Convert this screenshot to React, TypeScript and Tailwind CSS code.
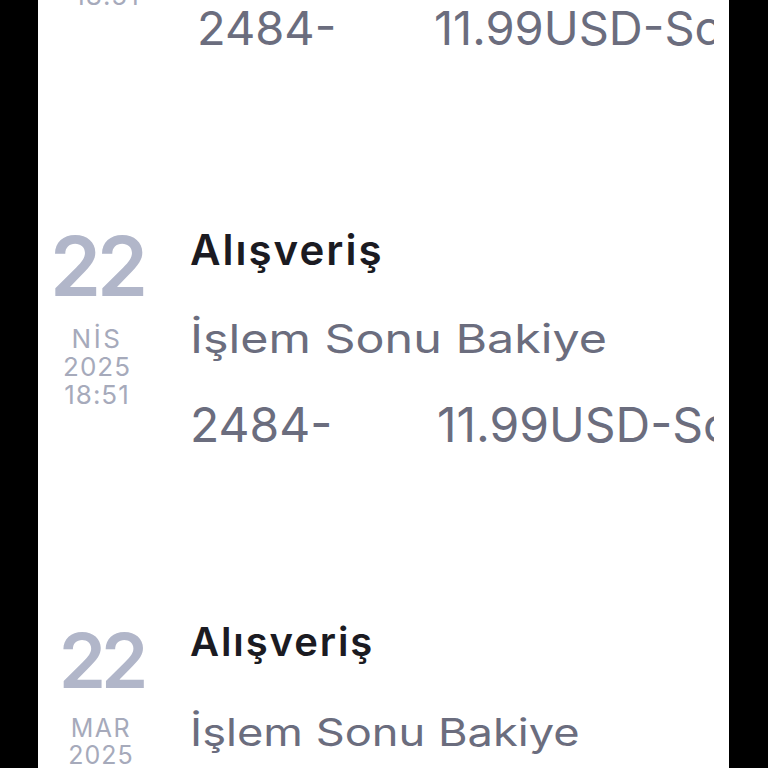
import React from "react";

const font = { fontFamily: "Inter, 'Noto Sans', sans-serif" };

export default function App() {
  return (
    <div className="w-full h-[768px] bg-black flex overflow-hidden" style={font}>
      <div className="ml-[38px] w-[691px] h-[768px] bg-white overflow-hidden pr-[15px] flex flex-col">
        {/* Row 1 (mostly scrolled above) */}
        <div className="-mt-[173px] h-[399px] shrink-0 flex items-start">
          <div className="ml-[10px] w-[118px] shrink-0 flex flex-col items-center">
            <div className="text-[82px] leading-none font-semibold text-[#b1b6c9] tracking-[-4px]">22</div>
            <div className="mt-[17px] text-[26px] leading-[28px] text-[#a6aabb] text-center tracking-[1px]">
              <div className="tracking-[2.5px]">NİS</div>
              <div>2025</div>
              <div>18:51</div>
            </div>
          </div>
          <div className="ml-[31px] flex-1 min-w-0 overflow-hidden whitespace-nowrap">
            <div className="mt-[3px] text-[42px] leading-none font-semibold text-[#1b1b22] tracking-[2px]">Alışveriş</div>
            <div className="mt-[48px] text-[40px] leading-none text-[#6b6d7e] origin-left scale-x-[1.21]">İşlem Sonu Bakiye</div>
            <div className="mt-[44px] text-[47px] leading-none text-[#6b6d7e]">
              <span className="inline-block w-[237px]">2484-</span>
              <span>11.99USD-Scribd</span>
            </div>
          </div>
        </div>

        {/* Row 2 */}
        <div className="h-[396px] shrink-0 flex items-start">
          <div className="w-[118px] shrink-0 flex flex-col items-center">
            <div className="text-[82px] leading-none font-semibold text-[#b1b6c9] tracking-[-4px]">22</div>
            <div className="mt-[17px] text-[26px] leading-[28px] text-[#a6aabb] text-center tracking-[1px]">
              <div className="tracking-[2.5px]">NİS</div>
              <div>2025</div>
              <div>18:51</div>
            </div>
          </div>
          <div className="ml-[34px] flex-1 min-w-0 overflow-hidden whitespace-nowrap">
            <div className="mt-[3px] text-[42px] leading-none font-semibold text-[#1b1b22] tracking-[2px]">Alışveriş</div>
            <div className="mt-[48px] text-[40px] leading-none text-[#6b6d7e] origin-left scale-x-[1.21]">İşlem Sonu Bakiye</div>
            <div className="mt-[42px] text-[48px] leading-none text-[#6b6d7e]">
              <span className="inline-block w-[247px]">2484-</span>
              <span>11.99USD-Scribd</span>
            </div>
          </div>
        </div>

        {/* Row 3 */}
        <div className="h-[400px] shrink-0 flex items-start">
          <div className="ml-[4px] w-[118px] shrink-0 flex flex-col items-center">
            <div className="text-[76px] leading-none font-semibold text-[#b1b6c9] tracking-[-5px]">22</div>
            <div className="mt-[17px] text-[25px] leading-[27px] text-[#a6aabb] text-center tracking-[1px]">
              <div className="tracking-[1.5px]">MAR</div>
              <div>2025</div>
              <div>18:51</div>
            </div>
          </div>
          <div className="ml-[30px] flex-1 min-w-0 overflow-hidden whitespace-nowrap">
            <div className="text-[40px] leading-none font-semibold text-[#1b1b22] tracking-[1.9px]">Alışveriş</div>
            <div className="mt-[51px] text-[38px] leading-none text-[#6b6d7e] origin-left scale-x-[1.19]">İşlem Sonu Bakiye</div>
            <div className="mt-[40px] text-[46px] leading-none text-[#6b6d7e]">
              <span className="inline-block w-[237px]">2484-</span>
              <span>11.99USD-Scribd</span>
            </div>
          </div>
        </div>
      </div>
    </div>
  );
}
